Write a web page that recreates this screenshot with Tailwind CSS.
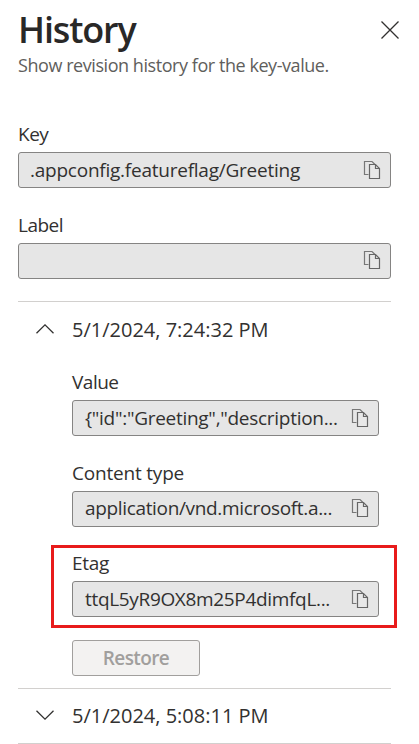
<!DOCTYPE html>
<html lang="en">
<head>
<meta charset="utf-8">
<title>History</title>
<script src="https://cdn.jsdelivr.net/npm/@tailwindcss/browser@4"></script>
</head>
<body class="bg-white font-['Segoe_UI','Open_Sans',sans-serif] text-[#323130]">
<svg class="hidden">
  <symbol id="copy" viewBox="0 0 18 20">
    <path d="M5.5 14.5H1.5V1.5H9L12.5 5" fill="none" stroke="#777" stroke-width="1.2"/>
    <path d="M6.5 4.500H12.5L16.5 8.5V18.5H6.500Z" fill="#e8e8e8" stroke="#666" stroke-width="1.2"/>
    <path d="M12.5 4.5V8.5H16.5" fill="none" stroke="#666" stroke-width="1.2"/>
  </symbol>
</svg>
<main class="w-[419px] h-[744px] overflow-hidden pl-[18px] pr-[28px] whitespace-nowrap">
  <header class="h-[116px] pt-[6px]">
    <div class="flex justify-between h-[48px]">
      <h1 class="text-[36px] leading-[48px] font-semibold text-[#292827] tracking-[-1.15px]">History</h1>
      <svg class="w-[18px] h-[18px] mt-[15px] -mr-[8px]" viewBox="0 0 18 18" fill="none" stroke="#323130" stroke-width="1.3"><path d="M.5.5l17 17M17.5.5l-17 17"/></svg>
    </div>
    <p class="text-[18px] leading-[22px] text-[#605e5c]"><span class="tracking-[-0.44px]">Show revision history for the key-value.</span></p>
  </header>
  <section>
    <div class="text-[19px] leading-[36px]"><span class="tracking-[-0.5px]">Key</span></div>
    <div class="h-[36px] flex items-center justify-between bg-[#e6e6e6] border border-[#858483] rounded-[3px] pl-[11px] pr-[9px] text-[19px]">
      <span class="tracking-[-0.24px]">.appconfig.featureflag/Greeting</span><svg class="w-[18px] h-[20px]"><use href="#copy"/></svg>
    </div>
    <div class="mt-[19px] text-[19px] leading-[36px]"><span class="tracking-[-0.5px]">Label</span></div>
    <div class="h-[36px] flex items-center justify-end bg-[#e6e6e6] border border-[#858483] rounded-[3px] pr-[9px]">
      <svg class="w-[18px] h-[20px] -mt-[2px]"><use href="#copy"/></svg>
    </div>
  </section>
  <section class="mt-[22px] border-t border-[#d2d0ce]">
    <div class="flex items-center h-[56px] text-[20px]">
      <svg class="ml-[18px] mr-[18px] w-[18px] h-[10px] -mt-[2px]" viewBox="0 0 18 10" fill="none" stroke="#323130" stroke-width="1.3"><path d="M.5 9.3L9 .9l8.500 8.400"/></svg>
      <span>5/1/2024, 7:24:32 PM</span>
    </div>
    <div class="pl-[54px] pr-[12px] pt-[6px] text-[19px]">
      <div class="leading-[36px]"><span class="tracking-[-0.5px]">Value</span></div>
      <div class="h-[36px] flex items-center justify-between bg-[#e6e6e6] border border-[#858483] rounded-[3px] pl-[12px] pr-[9px]">
        <span class="tracking-[-0.29px]">{"id":"Greeting","description...</span><svg class="w-[18px] h-[20px]"><use href="#copy"/></svg>
      </div>
      <div class="mt-[19px] leading-[36px]"><span class="tracking-[-0.2px]">Content type</span></div>
      <div class="h-[36px] flex items-center justify-between bg-[#e6e6e6] border border-[#858483] rounded-[3px] pl-[12px] pr-[9px]">
        <span class="tracking-[-0.34px] -mt-[2px]">application/vnd.microsoft.a...</span><svg class="w-[18px] h-[20px] -mt-[2px]"><use href="#copy"/></svg>
      </div>
      <div class="relative mt-[18px] h-[83px]">
        <div class="absolute inset-y-0 -left-[21px] -right-[18px] border-3 border-[#e81b1b]"></div>
        <div class="leading-[36px]"><span class="tracking-[-0.3px]">Etag</span></div>
        <div class="h-[36px] flex items-center justify-between bg-[#e6e6e6] border border-[#858483] rounded-[3px] pl-[12px] pr-[9px]">
          <span class="tracking-[-0.33px]">ttqL5yR9OX8m25P4dimfqL...</span><svg class="w-[18px] h-[20px]"><use href="#copy"/></svg>
        </div>
      </div>
      <button class="mt-[12px] block w-[128px] h-[36px] bg-[#f3f2f1] border border-[#a19f9d] rounded-[3px] text-[#a19f9d] font-semibold text-[19px] leading-[32px]"><span class="tracking-[-0.6px]">Restore</span></button>
    </div>
  </section>
  <section class="mt-[12px] border-y border-[#d2d0ce]">
    <div class="flex items-center h-[54px] text-[20px]">
      <svg class="ml-[18px] mr-[18px] w-[18px] h-[10px] -mt-[2px]" viewBox="0 0 18 10" fill="none" stroke="#323130" stroke-width="1.3"><path d="M.5.700L9 9.100l8.500-8.400"/></svg>
      <span>5/1/2024, 5:08:11 PM</span>
    </div>
  </section>
</main>
</body>
</html>
